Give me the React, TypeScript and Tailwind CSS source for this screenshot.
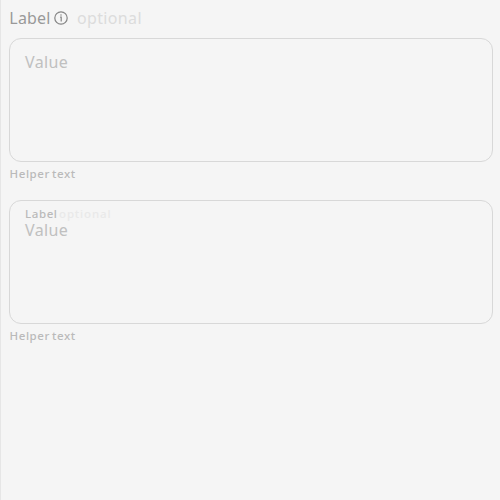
import React from "react";

function InfoIcon() {
  return (
    <svg width="14" height="14" viewBox="0 0 14 14" fill="none" stroke="#858585" strokeWidth="1.2">
      <circle cx="7" cy="7" r="6.2" />
      <path d="M6.1 6.2H7.2V10.4" />
      <circle cx="7" cy="4.1" r="0.75" fill="#858585" stroke="none" />
    </svg>
  );
}

function Helper() {
  return (
    <div className="mt-[4px] h-[16px] pl-[0.5px] text-[11.5px] leading-[16px] font-medium tracking-[0.6px] text-[#bababa] [word-spacing:-1.6px]">
      Helper text
    </div>
  );
}

export default function App() {
  return (
    <main className="h-[500px] w-[500px] border-l border-[#e6e6e6] bg-[#f5f5f5] pt-[8px] pr-[7px] pl-[8px] font-['Noto_Sans',sans-serif]">
      <div className="flex h-[20px] items-center text-[16px] leading-[20px]">
        <span className="w-[45px] pl-[0.3px] tracking-[0.2px] text-[#999999]">Label</span>
        <InfoIcon />
        <span className="ml-[9px] tracking-[0.35px] text-[#dcdcdc]">optional</span>
      </div>
      <div className="mt-[10px] h-[124px] rounded-[12px] border border-[#d8d8d8] px-[15px] pt-[13px] text-[16px] leading-[20px] tracking-[0.4px] text-[#c0c0c0]">
        Value
      </div>
      <Helper />
      <div className="mt-[18px] h-[124px] rounded-[12px] border border-[#d8d8d8] px-[15px] pt-[6px] text-[#c0c0c0]">
        <div className="flex h-[14px] text-[11.5px] leading-[14px] font-medium tracking-[0.6px]">
          <span className="w-[34px] text-[#bababa]">Label</span>
          <span className="tracking-[0.85px] text-[#e9e9e9]">optional</span>
        </div>
        <div className="-mt-px text-[16px] leading-[20px] tracking-[0.4px]">Value</div>
      </div>
      <Helper />
    </main>
  );
}
